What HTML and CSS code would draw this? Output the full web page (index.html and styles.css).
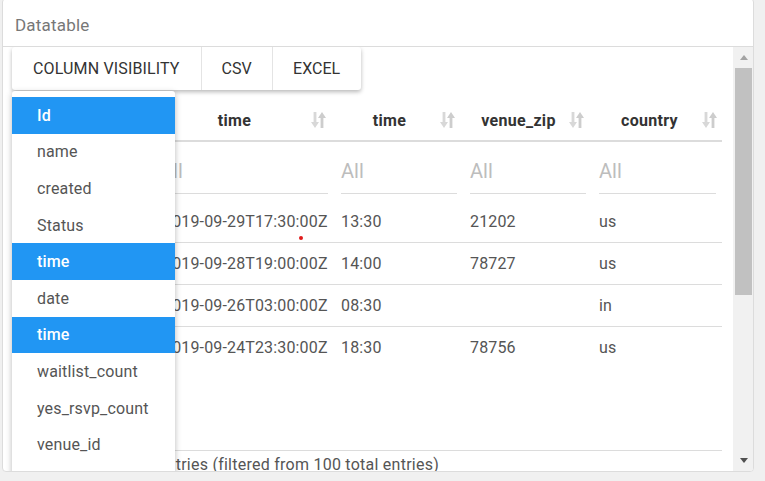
FILE: index.html
```html
<!DOCTYPE html>
<html>
<head>
<meta charset="utf-8">
<title>Datatable</title>
<link rel="stylesheet" href="styles.css">
</head>
<body>
<div class="card">
  <div class="card-header">Datatable</div>
  <div class="card-body">
    <div class="pane">
      <div class="btn-group">
        <button class="btn">Column visibility</button>
        <button class="btn">CSV</button>
        <button class="btn">Excel</button>
      </div>

      <div class="table">
        <div class="row head">
          <div class="th"><span class="label">time</span><svg class="sort" viewBox="0 0 15 18"><rect x="2.6" y="1" width="2.8" height="11" class="a1"/><polygon points="0,11 8,11 4,17" class="a1"/><polygon points="7,7 15,7 11,1" class="a2"/><rect x="9.6" y="6" width="2.8" height="11" class="a2"/></svg></div>
          <div class="th"><span class="label">time</span><svg class="sort" viewBox="0 0 15 18"><rect x="2.6" y="1" width="2.8" height="11" class="a1"/><polygon points="0,11 8,11 4,17" class="a1"/><polygon points="7,7 15,7 11,1" class="a2"/><rect x="9.6" y="6" width="2.8" height="11" class="a2"/></svg></div>
          <div class="th"><span class="label">venue_zip</span><svg class="sort" viewBox="0 0 15 18"><rect x="2.6" y="1" width="2.8" height="11" class="a1"/><polygon points="0,11 8,11 4,17" class="a1"/><polygon points="7,7 15,7 11,1" class="a2"/><rect x="9.6" y="6" width="2.8" height="11" class="a2"/></svg></div>
          <div class="th"><span class="label">country</span><svg class="sort" viewBox="0 0 15 18"><rect x="2.6" y="1" width="2.8" height="11" class="a1"/><polygon points="0,11 8,11 4,17" class="a1"/><polygon points="7,7 15,7 11,1" class="a2"/><rect x="9.6" y="6" width="2.8" height="11" class="a2"/></svg></div>
        </div>
        <div class="row filters">
          <div class="fc"><div class="input">All</div></div>
          <div class="fc"><div class="input">All</div></div>
          <div class="fc"><div class="input">All</div></div>
          <div class="fc"><div class="input">All</div></div>
        </div>
        <div class="row data">
          <div class="td first">2019-09-29T17:30:00Z</div>
          <div class="td">13:30</div>
          <div class="td">21202</div>
          <div class="td">us</div>
        </div>
        <div class="row data">
          <div class="td first">2019-09-28T19:00:00Z</div>
          <div class="td">14:00</div>
          <div class="td">78727</div>
          <div class="td">us</div>
        </div>
        <div class="row data">
          <div class="td first">2019-09-26T03:00:00Z</div>
          <div class="td">08:30</div>
          <div class="td"></div>
          <div class="td">in</div>
        </div>
        <div class="row data">
          <div class="td first">2019-09-24T23:30:00Z</div>
          <div class="td">18:30</div>
          <div class="td">78756</div>
          <div class="td">us</div>
        </div>
      </div>

      <div class="info">Showing 1 to 4 of 4 entries (filtered from 100 total entries)</div>

      <ul class="dropdown">
        <li class="active">Id</li>
        <li>name</li>
        <li>created</li>
        <li>Status</li>
        <li class="active">time</li>
        <li>date</li>
        <li class="active">time</li>
        <li>waitlist_count</li>
        <li>yes_rsvp_count</li>
        <li>venue_id</li>
        <li>venue_zip</li>
      </ul>

      <span class="dot"></span>
    </div>

    <div class="scrollbar">
      <div class="sb-btn"><span class="tri up"></span></div>
      <div class="track"><div class="thumb"></div></div>
      <div class="sb-btn"><span class="tri down"></span></div>
    </div>
  </div>
</div>
</body>
</html>
```

FILE: styles.css
```css
* {
  box-sizing: border-box;
}

html,
body {
  margin: 0;
  padding: 0;
}

body {
  background: #f0f0f0;
  font-family: Roboto, "Liberation Sans", Arial, sans-serif;
  font-size: 16px;
  width: 765px;
  height: 481px;
  overflow: hidden;
}

.card {
  margin: -2px 0 0 2px;
  width: 752px;
  height: 474px;
  background: #fff;
  border: 1px solid #dcdcdc;
  border-radius: 4px;
  overflow: hidden;
  display: flex;
  flex-direction: column;
}

.card-header {
  height: 48px;
  flex: none;
  border-bottom: 1px solid #dcdcdc;
  padding: 4px 12px 0 12px;
  display: flex;
  align-items: center;
  font-size: 17px;
  letter-spacing: 0.2px;
  color: #777;
}

.card-body {
  flex: 1;
  min-height: 0;
  display: flex;
}

.pane {
  flex: 1;
  position: relative;
  overflow: hidden;
  padding-left: 9px;
}

/* buttons */
.btn-group {
  display: flex;
  width: max-content;
  height: 43px;
  background: #fff;
  border-radius: 3px;
  box-shadow: 0 2px 4px rgba(0, 0, 0, 0.28);
}

.btn {
  font-family: inherit;
  font-size: 16px;
  text-transform: uppercase;
  color: #333;
  background: none;
  border: 0;
  padding: 0 0 1px 21px;
  width: auto;
  height: 43px;
}

.btn:first-child {
  padding-right: 21px;
  letter-spacing: 0.15px;
}

.btn:nth-child(2) {
  width: 71px;
  padding: 0 0 1px;
}

.btn:nth-child(3) {
  width: 89px;
  padding: 0 0 1px;
}

.btn + .btn {
  border-left: 1px solid #e4e4e4;
}

/* table */
.table {
  margin: 10px 0 0 138px;
  width: 572px;
  height: 350px;
}

.row {
  display: grid;
  grid-template-columns: 181px 129px 129px 133px;
}

.th {
  height: 42px;
  border-bottom: 2px solid #dcdcdc;
  display: flex;
  align-items: center;
  padding: 0 5px 0 8px;
  font-weight: 700;
  letter-spacing: 0.3px;
  color: #333;
}

.th .label {
  flex: 1;
  text-align: center;
}

.sort {
  width: 15px;
  height: 18px;
  flex: none;
}

.sort .a1 {
  fill: #d8d8d8;
}

.sort .a2 {
  fill: #cdcdcd;
}

.fc {
  height: 59px;
  padding: 8px 3px 0 10px;
}

.fc:last-child {
  padding-right: 6px;
}

.input {
  height: 44px;
  line-height: 43px;
  border-bottom: 1px solid #dcdcdc;
  font-size: 20px;
  color: #bdbdbd;
}

.td {
  height: 42px;
  line-height: 41px;
  border-bottom: 1px solid #dcdcdc;
  padding-left: 10px;
  color: #555;
  letter-spacing: 0.15px;
  white-space: nowrap;
}

.td.first {
  padding-left: 13px;
}

.data:last-child .td {
  border-bottom: 0;
}

.info {
  margin-right: 11px;
  border-top: 1px solid #dcdcdc;
  padding-top: 5px;
  line-height: 18px;
  color: #555;
  letter-spacing: 0.25px;
  white-space: nowrap;
}

/* column visibility dropdown */
.dropdown {
  position: absolute;
  left: 9px;
  top: 44px;
  width: 163px;
  margin: 0;
  padding: 6px 0;
  list-style: none;
  background: #fff;
  border-radius: 3px;
  box-shadow: 0 2px 6px rgba(0, 0, 0, 0.28);
}

.dropdown li {
  height: 36.6px;
  padding-left: 25px;
  display: flex;
  align-items: center;
  color: #555;
  letter-spacing: 0.15px;
}

.dropdown li.active {
  background: #2196f3;
  color: #fff;
  font-weight: 500;
}

.dot {
  position: absolute;
  left: 296px;
  top: 189px;
  width: 4px;
  height: 4px;
  border-radius: 50%;
  background: #e01b1b;
}

/* scrollbar */
.scrollbar {
  width: 20px;
  flex: none;
  background: #f1f1f1;
  display: flex;
  flex-direction: column;
}

.sb-btn {
  height: 21px;
  flex: none;
  display: flex;
  align-items: center;
  justify-content: center;
  padding-left: 1px;
}

.tri {
  width: 0;
  height: 0;
  border-left: 4.5px solid transparent;
  border-right: 4.5px solid transparent;
}

.tri.up {
  border-bottom: 5px solid #a3a3a3;
}

.tri.down {
  border-top: 5px solid #505050;
}

.track {
  flex: 1;
  padding: 0 1px 0 2px;
}

.thumb {
  height: 227px;
  background: #c1c1c1;
}
```
